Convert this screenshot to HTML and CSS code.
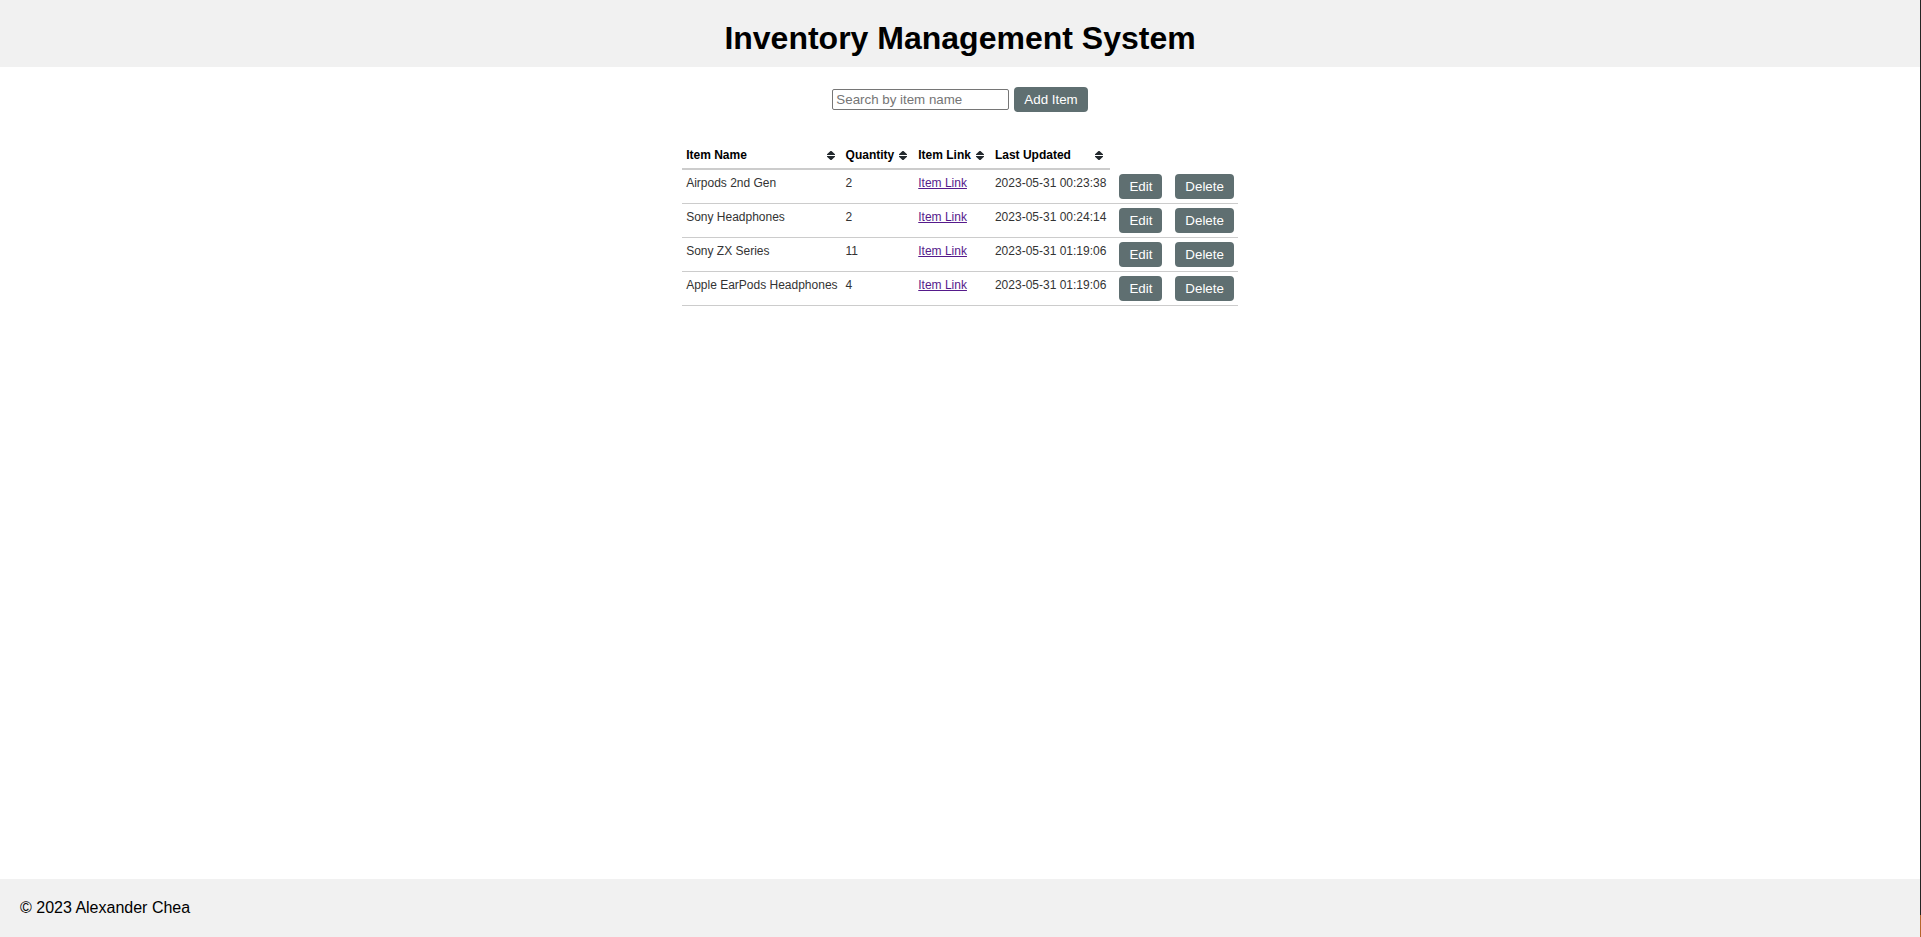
FILE: index.html
```html
<!DOCTYPE html>
<html lang="en">
<head>
<meta charset="utf-8">
<title>Inventory Management System</title>
<link rel="stylesheet" href="styles.css">
</head>
<body>
<svg class="sprite" aria-hidden="true"><symbol id="sort" viewBox="0 0 8 10"><path d="M3.5 1h1L8 4.3V5H0V4.3ZM0 6H8V6.7L4.5 10h-1L0 6.7Z"/></symbol></svg>
<div class="page">
  <header class="header"><h1 class="title">Inventory Management System</h1></header>
  <main class="main">
    <form class="toolbar">
      <input class="search" type="text" placeholder="Search by item name" aria-label="Search by item name">
      <button class="btn" type="button">Add Item</button>
    </form>
    <table class="items">
      <thead>
        <tr>
          <th scope="col"><button class="sort" type="button">Item Name<svg class="sort-icon"><use href="#sort"/></svg></button></th>
          <th scope="col"><button class="sort" type="button">Quantity<svg class="sort-icon"><use href="#sort"/></svg></button></th>
          <th scope="col"><button class="sort" type="button">Item Link<svg class="sort-icon"><use href="#sort"/></svg></button></th>
          <th scope="col"><button class="sort" type="button">Last Updated<svg class="sort-icon"><use href="#sort"/></svg></button></th>
        </tr>
      </thead>
      <tbody>
        <tr><td>Airpods 2nd Gen</td><td>2</td><td><a class="link" href="#">Item Link</a></td><td>2023-05-31 00:23:38</td><td class="action"><button class="btn" type="button">Edit</button></td><td class="action"><button class="btn" type="button">Delete</button></td></tr>
        <tr><td>Sony Headphones</td><td>2</td><td><a class="link" href="#">Item Link</a></td><td>2023-05-31 00:24:14</td><td class="action"><button class="btn" type="button">Edit</button></td><td class="action"><button class="btn" type="button">Delete</button></td></tr>
        <tr><td>Sony ZX Series</td><td>11</td><td><a class="link" href="#">Item Link</a></td><td>2023-05-31 01:19:06</td><td class="action"><button class="btn" type="button">Edit</button></td><td class="action"><button class="btn" type="button">Delete</button></td></tr>
        <tr><td>Apple EarPods Headphones</td><td>4</td><td><a class="link" href="#">Item Link</a></td><td>2023-05-31 01:19:06</td><td class="action"><button class="btn" type="button">Edit</button></td><td class="action"><button class="btn" type="button">Delete</button></td></tr>
      </tbody>
    </table>
  </main>
  <footer class="footer">© 2023 Alexander Chea</footer>
</div>
<div class="edge"></div>
</body>
</html>
```
FILE: styles.css
```css
* { box-sizing: border-box; }

body {
  margin: 0;
  min-height: 100vh;
  display: flex;
  font-family: "Liberation Sans", Arial, sans-serif;
  font-size: 16px;
  color: #000;
  background: #fff;
}

.sprite { position: absolute; width: 0; height: 0; }

.page {
  flex: 1;
  display: flex;
  flex-direction: column;
}

.edge {
  width: 1px;
  display: flex;
  background: #242424;
}

.edge::after {
  content: "";
  width: 1px;
  height: 22px;
  align-self: flex-end;
  background: #b5652b;
}

.header {
  padding: 20px 20px 10px;
  background: #f1f1f1;
  text-align: center;
}

.title {
  margin: 0;
  font-size: 32px;
  line-height: 37px;
}

.main {
  flex: 1;
  display: flex;
  flex-direction: column;
  align-items: center;
  gap: 30px;
  padding: 20px;
}

.toolbar {
  display: flex;
  align-items: center;
  gap: 5px;
}

.search {
  width: 177px;
  height: 21px;
  padding: 1px 3px;
  border: 1px solid #767676;
  border-radius: 2px;
  font-family: inherit;
}

.btn {
  display: block;
  padding: 5px 10px;
  border: 0;
  border-radius: 4px;
  background: #5f6f71;
  color: #fff;
  font-family: inherit;
  line-height: 15px;
}

.items {
  border-collapse: separate;
  border-spacing: 0;
  font-size: 12px;
  line-height: 18px;
}

.items th {
  padding: 4px;
  border-bottom: 2px solid #ccc;
}

.items td {
  padding: 4px;
  border-bottom: 1px solid #ccc;
  color: #333;
  vertical-align: top;
}

.items .action { padding-left: 9px; }

.sort {
  width: 100%;
  display: flex;
  align-items: center;
  justify-content: space-between;
  gap: 5px;
  padding: 0 3px 0 0;
  border: 0;
  background: none;
  color: #000;
  font: inherit;
}

.sort-icon {
  width: 8px;
  height: 10px;
  fill: #23292d;
}

.link { color: #551a8b; }

.footer {
  padding: 20px;
  background: #f1f1f1;
  line-height: 18px;
}
```
